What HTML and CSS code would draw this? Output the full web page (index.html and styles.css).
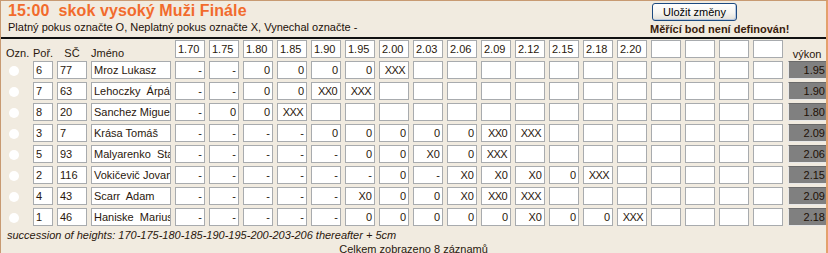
FILE: index.html
```html
<!DOCTYPE html>
<html lang="cs">
<head>
<meta charset="utf-8">
<title>skok vysoký</title>
<link rel="stylesheet" href="styles.css">
</head>
<body>
<div class="page">
  <div class="head">
    <div class="head-left">
      <div class="title">15:00&nbsp;&nbsp;skok vysoký Muži Finále</div>
      <div class="legend">Platný pokus označte O, Neplatný pokus označte X, Vynechal označte -</div>
    </div>
    <div class="head-right">
      <button class="save" type="button">Uložit změny</button>
      <div class="warn">Měřící bod není definován!</div>
    </div>
  </div>
  <div class="rule"></div>
  <div class="rows">
    <div class="row hdr">
      <div class="lbl l-ozn">Ozn.</div><div class="lbl">Poř.</div><div class="lbl l-c">SČ</div><div class="lbl">Jméno</div>
      <div class="c h">1.70</div><div class="c h">1.75</div><div class="c h">1.80</div><div class="c h">1.85</div><div class="c h">1.90</div><div class="c h">1.95</div><div class="c h">2.00</div><div class="c h">2.03</div><div class="c h">2.06</div><div class="c h">2.09</div><div class="c h">2.12</div><div class="c h">2.15</div><div class="c h">2.18</div><div class="c h">2.20</div><div class="c h"></div><div class="c h"></div><div class="c h"></div><div class="c h"></div>
      <div class="lbl l-c l-res">výkon</div>
    </div>
    <div class="row">
      <div class="mark"><span class="dot"></span></div><div class="c">6</div><div class="c">77</div><div class="c">Mroz Lukasz</div>
      <div class="c r">-</div><div class="c r">-</div><div class="c r">0</div><div class="c r">0</div><div class="c r">0</div><div class="c r">0</div><div class="c r x">XXX</div><div class="c r"></div><div class="c r"></div><div class="c r"></div><div class="c r"></div><div class="c r"></div><div class="c r"></div><div class="c r"></div><div class="c r"></div><div class="c r"></div><div class="c r"></div><div class="c r"></div>
      <div class="res">1.95</div>
    </div>
    <div class="row">
      <div class="mark"><span class="dot"></span></div><div class="c">7</div><div class="c">63</div><div class="c">Lehoczky  Árpád</div>
      <div class="c r">-</div><div class="c r">-</div><div class="c r">0</div><div class="c r">0</div><div class="c r x">XX0</div><div class="c r x">XXX</div><div class="c r"></div><div class="c r"></div><div class="c r"></div><div class="c r"></div><div class="c r"></div><div class="c r"></div><div class="c r"></div><div class="c r"></div><div class="c r"></div><div class="c r"></div><div class="c r"></div><div class="c r"></div>
      <div class="res">1.90</div>
    </div>
    <div class="row">
      <div class="mark"><span class="dot"></span></div><div class="c">8</div><div class="c">20</div><div class="c">Sanchez Miguel</div>
      <div class="c r">-</div><div class="c r">0</div><div class="c r">0</div><div class="c r x">XXX</div><div class="c r"></div><div class="c r"></div><div class="c r"></div><div class="c r"></div><div class="c r"></div><div class="c r"></div><div class="c r"></div><div class="c r"></div><div class="c r"></div><div class="c r"></div><div class="c r"></div><div class="c r"></div><div class="c r"></div><div class="c r"></div>
      <div class="res">1.80</div>
    </div>
    <div class="row">
      <div class="mark"><span class="dot"></span></div><div class="c">3</div><div class="c">7</div><div class="c">Krása Tomáš</div>
      <div class="c r">-</div><div class="c r">-</div><div class="c r">-</div><div class="c r">-</div><div class="c r">0</div><div class="c r">0</div><div class="c r">0</div><div class="c r">0</div><div class="c r">0</div><div class="c r x">XX0</div><div class="c r x">XXX</div><div class="c r"></div><div class="c r"></div><div class="c r"></div><div class="c r"></div><div class="c r"></div><div class="c r"></div><div class="c r"></div>
      <div class="res">2.09</div>
    </div>
    <div class="row">
      <div class="mark"><span class="dot"></span></div><div class="c">5</div><div class="c">93</div><div class="c">Malyarenko  Stanislav</div>
      <div class="c r">-</div><div class="c r">-</div><div class="c r">-</div><div class="c r">-</div><div class="c r">-</div><div class="c r">0</div><div class="c r">0</div><div class="c r">X0</div><div class="c r">0</div><div class="c r x">XXX</div><div class="c r"></div><div class="c r"></div><div class="c r"></div><div class="c r"></div><div class="c r"></div><div class="c r"></div><div class="c r"></div><div class="c r"></div>
      <div class="res">2.06</div>
    </div>
    <div class="row">
      <div class="mark"><span class="dot"></span></div><div class="c">2</div><div class="c">116</div><div class="c">Vokičevič Jovan</div>
      <div class="c r">-</div><div class="c r">-</div><div class="c r">-</div><div class="c r">-</div><div class="c r">-</div><div class="c r">-</div><div class="c r">0</div><div class="c r">-</div><div class="c r">X0</div><div class="c r">X0</div><div class="c r">X0</div><div class="c r">0</div><div class="c r x">XXX</div><div class="c r"></div><div class="c r"></div><div class="c r"></div><div class="c r"></div><div class="c r"></div>
      <div class="res">2.15</div>
    </div>
    <div class="row">
      <div class="mark"><span class="dot"></span></div><div class="c">4</div><div class="c">43</div><div class="c">Scarr  Adam</div>
      <div class="c r">-</div><div class="c r">-</div><div class="c r">-</div><div class="c r">-</div><div class="c r">-</div><div class="c r">X0</div><div class="c r">0</div><div class="c r">0</div><div class="c r">X0</div><div class="c r x">XX0</div><div class="c r x">XXX</div><div class="c r"></div><div class="c r"></div><div class="c r"></div><div class="c r"></div><div class="c r"></div><div class="c r"></div><div class="c r"></div>
      <div class="res">2.09</div>
    </div>
    <div class="row">
      <div class="mark"><span class="dot"></span></div><div class="c">1</div><div class="c">46</div><div class="c">Haniske  Mariusz</div>
      <div class="c r">-</div><div class="c r">-</div><div class="c r">-</div><div class="c r">-</div><div class="c r">-</div><div class="c r">0</div><div class="c r">0</div><div class="c r">0</div><div class="c r">0</div><div class="c r">0</div><div class="c r">X0</div><div class="c r">0</div><div class="c r">0</div><div class="c r x">XXX</div><div class="c r"></div><div class="c r"></div><div class="c r"></div><div class="c r"></div>
      <div class="res">2.18</div>
    </div>
  </div>
  <div class="note">succession of heights: 170-175-180-185-190-195-200-203-206 thereafter + 5cm</div>
  <div class="total">Celkem zobrazeno 8 záznamů</div>
</div>
</body>
</html>
```
FILE: styles.css
```css
html, body {
  margin: 0;
  padding: 0;
  background: #f1ebe0;
}
.page {
  box-sizing: border-box;
  width: 828px;
  height: 253px;
  border-top: 1px solid #c89a72;
  border-left: 1px solid #c89a72;
  border-right: 2px solid #e4a06c;
  background: #f1ebe0;
  padding-top: 1px;
  font-family: "Liberation Sans", Arial, sans-serif;
  font-size: 11px;
  color: #2a170c;
}
.head {
  display: flex;
  padding-left: 7px;
}
.head-left {
  width: 642px;
}
.title {
  font-size: 16px;
  font-weight: bold;
  line-height: 18px;
  color: #f26b2d;
  letter-spacing: 0.1px;
}
.legend {
  line-height: 14px;
  color: #1c1008;
}
.head-right {
  padding-top: 1px;
}
.save {
  display: block;
  margin-left: 2px;
  width: 85px;
  height: 18px;
  padding: 0;
  border: 1px solid #1c4a80;
  border-radius: 3px;
  background: linear-gradient(#ffffff 0%, #f6f5f1 55%, #e2e0d8 100%);
  box-shadow: inset -1px -1px 0 #b8c8e0;
  font-family: "Liberation Sans", Arial, sans-serif;
  font-size: 11px;
  line-height: 16px;
  color: #000;
}
.warn {
  margin-top: 1px;
  font-weight: bold;
  line-height: 14px;
  color: #3a1c0c;
}
.rule {
  height: 2px;
  background: #111;
  margin-top: 1px;
  margin-bottom: 1px;
}
.rows {
  display: flex;
  flex-direction: column;
  gap: 3px;
  padding-left: 4px;
}
.row {
  display: grid;
  grid-template-columns: 24px 20px 30px 80px repeat(18, 30px) 39px;
  column-gap: 4px;
  height: 18px;
}
.lbl {
  align-self: end;
  line-height: 13px;
  margin-bottom: -2px;
  white-space: nowrap;
}
.l-ozn { margin-left: 1px; }
.l-c { text-align: center; }
.l-res { margin-left: 1px; margin-bottom: -3px; }
.mark {
  display: flex;
  align-items: center;
}
.dot {
  display: block;
  width: 10px;
  height: 10px;
  margin-left: 4px;
  margin-top: 1px;
  border-radius: 50%;
  background: #ffffff;
}
.c {
  box-sizing: border-box;
  height: 18px;
  border: 1px solid #a8abae;
  background: #fff;
  padding: 0 2px;
  line-height: 16px;
  white-space: pre;
  overflow: hidden;
}
.c.h { padding-left: 2px; }
.c.r { text-align: right; }
.c.x { letter-spacing: -0.6px; padding-right: 3px; }
.res {
  box-sizing: border-box;
  margin-left: 1px;
  height: 18px;
  background: #808080;
  border-top: 1px solid #6a6a6a;
  border-left: 1px solid #e8e8e8;
  border-bottom: 1px solid #e8e8e8;
  padding-right: 1px;
  text-align: right;
  line-height: 16px;
  color: #1e1006;
}
.note {
  margin-top: 2px;
  padding-left: 6px;
  font-style: italic;
  line-height: 14px;
  white-space: nowrap;
}
.total {
  text-align: center;
  line-height: 14px;
}
```
